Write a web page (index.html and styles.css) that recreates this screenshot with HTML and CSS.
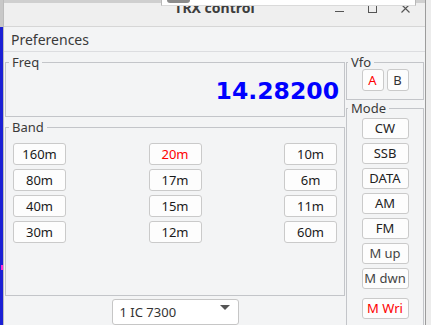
FILE: index.html
```html
<!DOCTYPE html>
<html>
<head>
<meta charset="utf-8">
<link rel="stylesheet" href="styles.css">
</head>
<body>
<div class="desk"><span class="mark"></span></div>
<div class="window">
  <header class="titlebar">
    <span class="title">TRX control</span>
    <div class="wctl">
      <svg width="9" height="9" viewBox="0 0 9 9"><path d="M0 7.5H9" stroke="#555" stroke-width="1"/></svg>
      <svg width="9" height="9" viewBox="0 0 9 9"><rect x="0.5" y="0.5" width="8" height="8" fill="none" stroke="#555" stroke-width="1"/></svg>
      <svg width="9" height="9" viewBox="0 0 9 9"><path d="M0.5 0.5L8.5 8.5M8.5 0.5L0.5 8.5" stroke="#555" stroke-width="1.1"/></svg>
    </div>
  </header>
  <nav class="menubar"><span class="menu">Preferences</span></nav>
  <main class="content">
    <div class="leftcol">
      <fieldset class="group freq">
        <legend>Freq</legend>
        <div class="freq-value">14.28200</div>
      </fieldset>
      <fieldset class="group band">
        <legend>Band</legend>
        <div class="band-grid">
          <button class="btn bandbtn">160m</button>
          <button class="btn bandbtn active">20m</button>
          <button class="btn bandbtn">10m</button>
          <button class="btn bandbtn">80m</button>
          <button class="btn bandbtn">17m</button>
          <button class="btn bandbtn">6m</button>
          <button class="btn bandbtn">40m</button>
          <button class="btn bandbtn">15m</button>
          <button class="btn bandbtn">11m</button>
          <button class="btn bandbtn">30m</button>
          <button class="btn bandbtn">12m</button>
          <button class="btn bandbtn">60m</button>
        </div>
      </fieldset>
      <div class="combo">
        <span class="combo-text">1 IC 7300</span>
        <svg class="combo-arrow" width="10" height="5" viewBox="0 0 10 5"><path d="M0 0H10L5 5Z" fill="#555"/></svg>
      </div>
    </div>
    <div class="rightcol">
      <fieldset class="group vfo">
        <legend>Vfo</legend>
        <div class="vfo-row">
          <button class="btn vfobtn active">A</button>
          <button class="btn vfobtn">B</button>
        </div>
      </fieldset>
      <fieldset class="group mode">
        <legend>Mode</legend>
        <div class="mode-col">
          <button class="btn modebtn">CW</button>
          <button class="btn modebtn">SSB</button>
          <button class="btn modebtn">DATA</button>
          <button class="btn modebtn">AM</button>
          <button class="btn modebtn">FM</button>
          <button class="btn modebtn dim">M up</button>
          <button class="btn modebtn dim">M dwn</button>
          <button class="btn modebtn active write">M Wri</button>
        </div>
      </fieldset>
    </div>
  </main>
</div>
<div class="edge"></div>
<div class="overlay"><span class="grip"></span></div>
</body>
</html>
```

FILE: styles.css
```css
* { box-sizing: border-box; }
html, body { margin: 0; padding: 0; }
body {
  width: 431px;
  height: 325px;
  overflow: hidden;
  display: flex;
  position: relative;
  font-family: "Noto Sans", sans-serif;
  background: #f3f4f5;
  color: #333;
}
.desk {
  width: 3px;
  flex: none;
  position: relative;
  background: linear-gradient(#c8c8c8 0 27px, #1b20d4 27px);
}
.desk .mark {
  position: absolute;
  left: 1px;
  top: 265px;
  width: 2px;
  height: 5px;
  background: #ff2bd6;
}
.window {
  flex: 1;
  min-width: 0;
  display: flex;
  flex-direction: column;
  border-left: 1px solid #bcbcbc;
  background: #f3f4f5;
}
.edge {
  width: 6px;
  flex: none;
  border-left: 1px solid #9c9c9c;
  background: #ececec;
}
.overlay {
  position: absolute;
  left: 161px;
  top: 0;
  width: 255px;
  height: 6px;
  background: #fff;
  border: 1px solid #b8b8b8;
  border-top: none;
  border-bottom-color: #dadada;
}
.grip {
  position: absolute;
  left: 5px;
  top: 0;
  width: 23px;
  height: 3px;
  background: #8c8c8c;
  border-radius: 0 0 3px 3px;
}
.titlebar {
  height: 27px;
  flex: none;
  border-bottom: 1px solid #d6d6d6;
  background: linear-gradient(#cfcfcf 0 3px, #efefef 3px);
  display: grid;
  grid-template-columns: 1fr auto 1fr;
  align-items: start;
}
.title {
  grid-column: 2;
  font-weight: bold;
  font-size: 14px;
  line-height: 16px;
  color: #3d3d3d;
}
.wctl {
  grid-column: 3;
  justify-self: end;
  display: flex;
  gap: 24px;
  padding-top: 4px;
  margin-right: 15px;
}
.wctl svg { display: block; }
.menubar {
  height: 25px;
  flex: none;
  border-bottom: 1px solid #dcdde0;
  padding: 5px 0 0 7px;
  font-size: 14px;
  line-height: 16px;
  color: #3a3a3a;
}
.content {
  flex: 1;
  min-height: 0;
  display: flex;
  gap: 1px;
  padding: 3px 1px 0;
}
.leftcol {
  width: 340px;
  flex: none;
  display: flex;
  flex-direction: column;
}
.rightcol {
  width: 78px;
  flex: none;
  display: flex;
  flex-direction: column;
}
.group {
  margin: 0;
  padding: 0;
  min-width: 0;
  border: 1px solid #c3c5c9;
}
.group legend {
  font-size: 13px;
  line-height: 14px;
  padding: 0 3px;
  margin-left: 3px;
  color: #3a3a3a;
}
.rightcol .group legend { margin-left: 1px; }
.freq-value {
  font-family: "DejaVu Sans", sans-serif;
  font-weight: bold;
  font-size: 23.5px;
  line-height: 28px;
  color: #0000ff;
  text-align: right;
  padding: 8px 5px 11px 0;
}
.band {
  margin-top: 3px;
  height: 184px;
}
.band-grid {
  display: grid;
  grid-template-columns: repeat(3, 53px);
  justify-content: space-between;
  row-gap: 4px;
  padding: 9px 7px 0;
}
.btn {
  font-family: "Noto Sans", sans-serif;
  font-size: 13px;
  line-height: 1;
  margin: 0;
  padding: 0;
  background: #fdfdfd;
  border: 1px solid #cacaca;
  border-radius: 3px;
  color: #1a1a1a;
  display: flex;
  align-items: center;
  justify-content: center;
  white-space: nowrap;
}
.bandbtn { height: 22px; }
.btn.active { color: #ff0000; }
.combo {
  margin: 3px auto 0;
  width: 127px;
  height: 26px;
  flex: none;
  background: #fff;
  border: 1px solid #c6c6c6;
  border-radius: 3px;
  display: flex;
  justify-content: space-between;
  align-items: flex-start;
  padding: 4px 8px 0 7px;
  font-size: 13px;
  line-height: 16px;
  color: #333;
}
.combo-arrow { display: block; margin-top: 1px; }
.vfo-row {
  display: flex;
  justify-content: center;
  gap: 3px;
  padding-bottom: 8px;
}
.vfobtn { width: 22px; height: 22px; }
.vfobtn:not(.active) { color: #333; }
.mode {
  margin-top: 1px;
  min-height: 240px;
  flex: none;
}
.mode-col {
  display: flex;
  flex-direction: column;
  align-items: center;
  gap: 4px;
  padding-top: 3px;
}
.modebtn { width: 47px; height: 21px; color: #222; }
.modebtn.dim { color: #444; }
.modebtn.write { margin-top: 5px; color: #ff0000; }
```
